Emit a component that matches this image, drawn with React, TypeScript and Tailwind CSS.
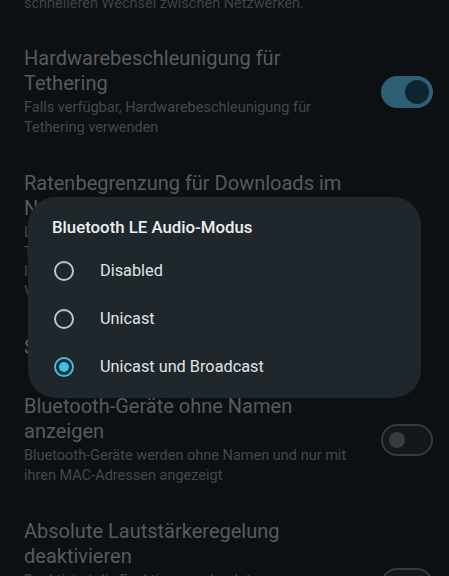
import React from "react";

const font = { fontFamily: "Roboto, 'Noto Sans', sans-serif" };

function Toggle({ on }: { on: boolean }) {
  if (on) {
    return (
      <div className="w-[52px] h-[32px] rounded-full bg-[#2d6074] flex items-center justify-end pr-[4px] shrink-0">
        <div className="w-[24px] h-[24px] rounded-full bg-[#0c2530]" />
      </div>
    );
  }
  return (
    <div className="w-[52px] h-[32px] rounded-full bg-[#14181b] border-2 border-[#34393c] flex items-center pl-[6px] shrink-0">
      <div className="w-[16px] h-[16px] rounded-full bg-[#383c3f]" />
    </div>
  );
}

function Item({
  title,
  sub,
  toggle,
}: {
  title: string[];
  sub?: string[];
  toggle?: boolean;
}) {
  return (
    <div className="flex items-center pl-[24px] pr-[16px] py-[17px]">
      <div className="flex-1 min-w-0">
        <div className="text-[20px] leading-[25px] text-[#565b5f]">
          {title.map((t, i) => (
            <div key={i} className="whitespace-nowrap">{t}</div>
          ))}
        </div>
        {sub && (
          <div className="text-[14.5px] leading-[19.5px] text-[#43484c] mt-[2px]">
            {sub.map((t, i) => (
              <div key={i} className="whitespace-nowrap">{t}</div>
            ))}
          </div>
        )}
      </div>
      {toggle !== undefined && <Toggle on={toggle} />}
    </div>
  );
}

function Radio({ selected, label }: { selected: boolean; label: string }) {
  return (
    <div className="h-[48px] flex items-center">
      <div className="w-[22px] h-[22px] flex items-center justify-center ml-[1px]">
        {selected ? (
          <div className="w-[20px] h-[20px] rounded-full border-2 border-[#36c5f0] flex items-center justify-center">
            <div className="w-[10px] h-[10px] rounded-full bg-[#36c5f0]" />
          </div>
        ) : (
          <div className="w-[20px] h-[20px] rounded-full border-2 border-[#c2c5c7]" />
        )}
      </div>
      <span className="ml-[25px] text-[16.3px] text-[#e0e3e5]">{label}</span>
    </div>
  );
}

export default function App() {
  return (
    <div className="relative w-[449px] h-[576px] overflow-hidden bg-[#0c1013]" style={font}>
      <div className="-mt-[6px]">
        <div className="pl-[24px] pb-[15px] text-[14.5px] leading-[20px] text-[#3e4347]">
          schnelleren Wechsel zwischen Netzwerken.
        </div>
        <Item
          title={["Hardwarebeschleunigung für", "Tethering"]}
          sub={["Falls verfügbar, Hardwarebeschleunigung für", "Tethering verwenden"]}
          toggle={true}
        />
        <Item
          title={["Ratenbegrenzung für Downloads im", "Netzwerk"]}
          sub={[
            "Legt die Ratenbegrenzung für eingehende Daten",
            "The Netzwerkbandbreite fest, die auf alle",
            "Internetverbindungen angewendet wird, die",
            "Verbindungen zum Internet herstellen.",
          ]}
        />
        <Item title={["Standardmäßig keine Begrenzung"]} />
        <Item
          title={["Bluetooth-Geräte ohne Namen", "anzeigen"]}
          sub={["Bluetooth-Geräte werden ohne Namen und nur mit", "ihren MAC-Adressen angezeigt"]}
          toggle={false}
        />
        <Item
          title={["Absolute Lautstärkeregelung", "deaktivieren"]}
          sub={[
            "Deaktiviert die Funktion zur absoluten",
            "Lautstärkeregelung bei Bluetooth-Geräten,",
            "falls Probleme auftreten, z. B. bei zu hoher",
            "Lautstärke",
          ]}
          toggle={false}
        />
      </div>

      <div className="absolute left-[28px] top-[197px] w-[393px] h-[201px] rounded-[28px] bg-[#1f272d] px-[24px] pt-[19px]">
        <div className="text-[16.8px] leading-[22px] font-medium text-[#eceef0]">Bluetooth LE Audio-Modus</div>
        <div className="mt-[9px]">
          <Radio selected={false} label="Disabled" />
          <Radio selected={false} label="Unicast" />
          <Radio selected={true} label="Unicast und Broadcast" />
        </div>
      </div>
    </div>
  );
}
